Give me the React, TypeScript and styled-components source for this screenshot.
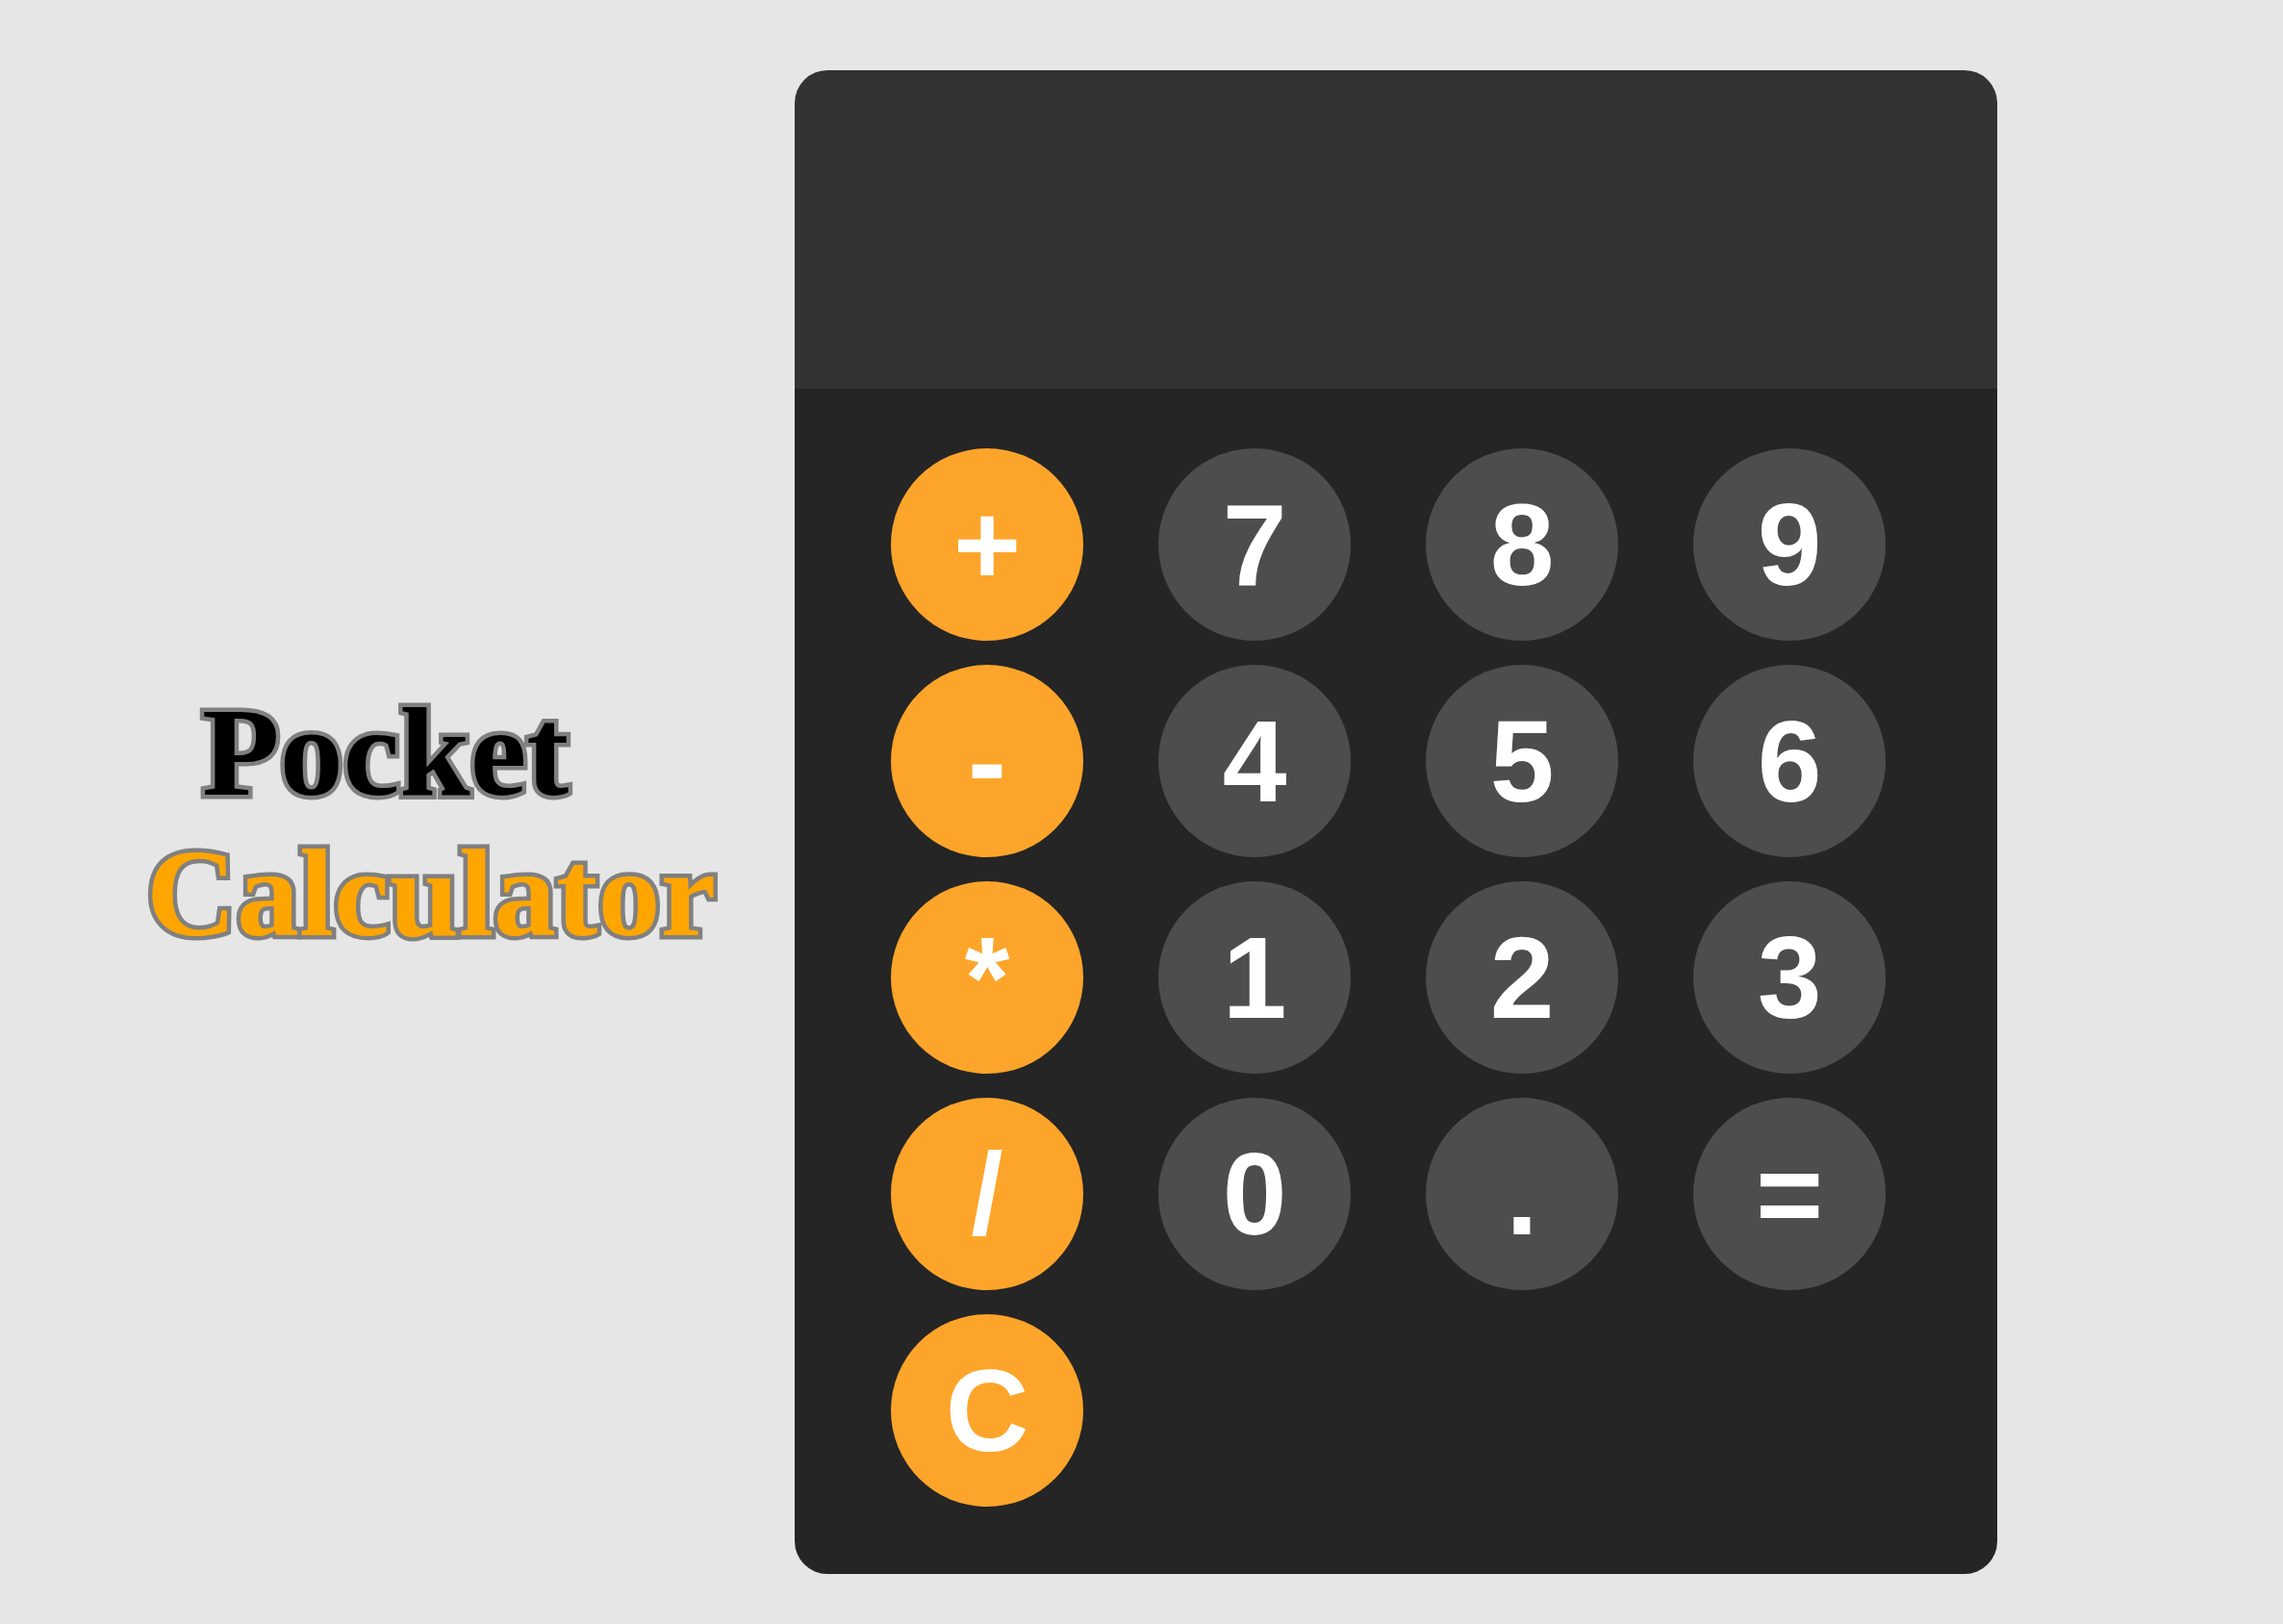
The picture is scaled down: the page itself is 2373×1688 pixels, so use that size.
import React from "react";
import styled, { createGlobalStyle } from "styled-components";

const GlobalStyle = createGlobalStyle`
  html, body {
    margin: 0;
    padding: 0;
    background: #e6e6e6;
  }
  * { box-sizing: border-box; }
`;

const Page = styled.div`
  display: flex;
  align-items: center;
  min-height: 1688px;
  padding: 73px 0 52px 0;
  background: #e6e6e6;
`;

const TitleBox = styled.div`
  width: 826px;
  display: flex;
  flex-direction: column;
`;

const TitleLine = styled.div<{ $color: string; $indent: number; $size: number }>`
  font-family: "Liberation Serif", "DejaVu Serif", serif;
  font-weight: 700;
  font-size: ${(p) => p.$size}px;
  line-height: 146px;
  color: ${(p) => p.$color};
  -webkit-text-stroke: 9px #808080;
  paint-order: stroke fill;
  padding-left: ${(p) => p.$indent}px;
  white-space: nowrap;
`;

const Calculator = styled.div`
  width: 1250px;
  border-radius: 34px;
  overflow: hidden;
  display: flex;
  flex-direction: column;
`;

const Screen = styled.div`
  height: 331px;
  background: #333333;
`;

const Keypad = styled.div`
  background: #252525;
  padding: 62px 116px 70px 100px;
  display: flex;
  gap: 78px;
  align-items: flex-start;
`;

const Operators = styled.div`
  display: flex;
  flex-direction: column;
  gap: 25px;
`;

const Digits = styled.div`
  display: grid;
  grid-template-columns: repeat(3, 200px);
  column-gap: 78px;
  row-gap: 25px;
`;

const Key = styled.button<{ $op?: boolean }>`
  width: 200px;
  height: 200px;
  border-radius: 50%;
  border: none;
  padding: 0;
  margin: 0;
  display: flex;
  align-items: center;
  justify-content: center;
  background: ${(p) => (p.$op ? "#fda52b" : "#4d4d4d")};
  color: #ffffff;
  font-family: "Liberation Sans", Arial, sans-serif;
  font-weight: 700;
  font-size: 120px;
  line-height: normal;
  cursor: pointer;
`;

const ops = ["+", "-", "*", "/", "C"];
const digits = ["7", "8", "9", "4", "5", "6", "1", "2", "3", "0", ".", "="];

export default function App() {
  return (
    <>
      <GlobalStyle />
      <Page>
        <TitleBox>
          <TitleLine $color="#000000" $indent={210} $size={132}>Pocket</TitleLine>
          <TitleLine $color="#ffa500" $indent={152} $size={130}>Calculator</TitleLine>
        </TitleBox>
        <Calculator>
          <Screen />
          <Keypad>
            <Operators>
              {ops.map((o) => (
                <Key key={o} $op>
                  {o}
                </Key>
              ))}
            </Operators>
            <Digits>
              {digits.map((d) => (
                <Key key={d}>{d}</Key>
              ))}
            </Digits>
          </Keypad>
        </Calculator>
      </Page>
    </>
  );
}
